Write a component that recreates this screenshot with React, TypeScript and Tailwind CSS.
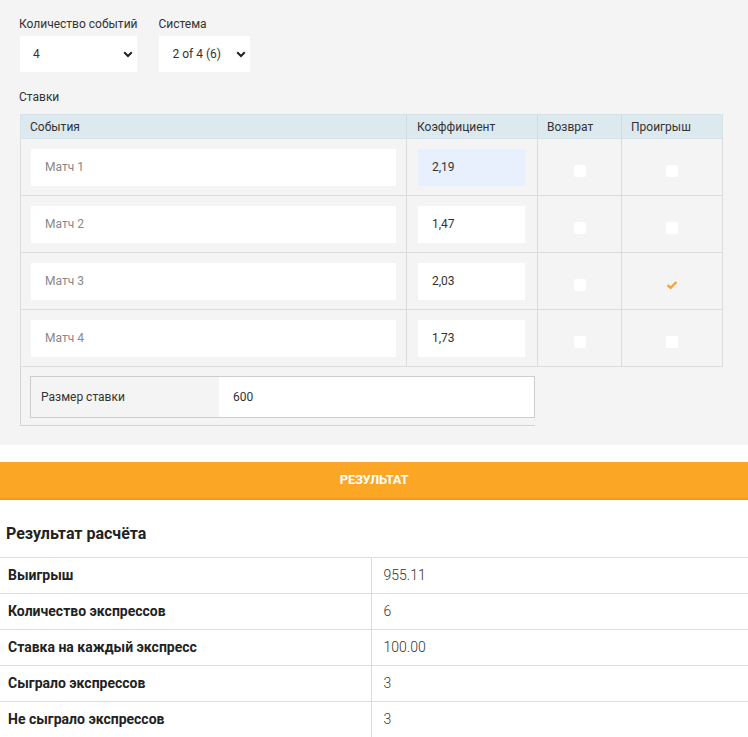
import React from 'react';

const matches = [
  { name: 'Матч 1', coef: '2,19', active: true, lose: false },
  { name: 'Матч 2', coef: '1,47', active: false, lose: false },
  { name: 'Матч 3', coef: '2,03', active: false, lose: true },
  { name: 'Матч 4', coef: '1,73', active: false, lose: false },
];

const results = [
  ['Выигрыш', '955.11'],
  ['Количество экспрессов', '6'],
  ['Ставка на каждый экспресс', '100.00'],
  ['Сыграло экспрессов', '3'],
  ['Не сыграло экспрессов', '3'],
];

const Chevron = () => (
  <svg width="10" height="7" viewBox="0 0 10 7" fill="none">
    <path d="M1.2 1.2 5 5 8.8 1.2" stroke="#222" strokeWidth="2" />
  </svg>
);

const Box = ({ checked }: { checked?: boolean }) =>
  checked ? (
    <svg width="12" height="10" viewBox="0 0 12 10">
      <path d="M1.5 5.2 4.6 7.8 10.5 2" stroke="#f3a53a" strokeWidth="2.4" fill="none" />
    </svg>
  ) : (
    <div className="w-3 h-3 bg-white rounded-[2px]" />
  );

export default function App() {
  return (
    <div className="w-[748px] h-[737px] overflow-hidden bg-white text-[#333]" style={{ fontFamily: 'Roboto, "Liberation Sans", sans-serif' }}>
      <div className="bg-[#f4f4f4] h-[445px] pt-[16px] pl-[19px]">
        <div className="flex gap-[21px]">
          <div className="flex flex-col">
            <span className="text-[12px] leading-[16px] text-[#333]">Количество событий</span>
            <div className="mt-[4px] ml-px w-[117px] h-9 bg-white flex items-center justify-between pl-[13px] pr-[4px] text-[12px]">
              <span>4</span>
              <Chevron />
            </div>
          </div>
          <div className="flex flex-col">
            <span className="text-[12px] leading-[16px] text-[#333]">Система</span>
            <div className="mt-[4px] w-[91px] h-9 bg-white flex items-center justify-between pl-[14px] pr-[4px] text-[12px]">
              <span>2 of 4 (6)</span>
              <Chevron />
            </div>
          </div>
        </div>
        <div className="mt-[17px] text-[12px] leading-[16px]">Ставки</div>
        <div className="mt-[9px] ml-px w-[703px] text-[12px]">
          <div className="flex h-[25px] bg-[#dce9ef] border border-[#d6e2e8] items-center">
            <div className="w-[386px] pl-[9px] border-r border-[#cfdbe0] h-full flex items-center">События</div>
            <div className="w-[131px] pl-[10px] border-r border-[#cfdbe0] h-full flex items-center">Коэффициент</div>
            <div className="w-[84px] pl-[9px] border-r border-[#cfdbe0] h-full flex items-center">Возврат</div>
            <div className="flex-1 pl-[9px] h-full flex items-center">Проигрыш</div>
          </div>
          {matches.map((m) => (
            <div key={m.name} className="flex h-[57px] border-x border-b border-[#dcdcdc]">
              <div className="w-[386px] border-r border-[#dcdcdc] pl-[10px] pr-[10px] flex items-center">
                <div className="w-full h-[37px] bg-white flex items-center pl-[14px] text-[#888]">{m.name}</div>
              </div>
              <div className="w-[131px] border-r border-[#dcdcdc] pl-[11px] flex items-center">
                <div className={`w-[107px] h-[37px] flex items-center pl-[14px] text-[#333] ${m.active ? 'bg-[#e8f0fe]' : 'bg-white'}`}>{m.coef}</div>
              </div>
              <div className="w-[84px] border-r border-[#dcdcdc] flex items-center justify-center pt-[8px]">
                <Box />
              </div>
              <div className="flex-1 flex items-center justify-center pt-[8px]">
                <Box checked={m.lose} />
              </div>
            </div>
          ))}
          <div className="w-[515px] border-l border-b border-[#d4d4d4] pl-[9px] pt-[9px] pb-[7px]">
            <div className="h-[42px] border border-[#cdcdcd] flex items-center">
              <div className="w-[188px] pl-[10px]">Размер ставки</div>
              <div className="flex-1 h-full bg-white flex items-center pl-[14px]">600</div>
            </div>
          </div>
        </div>
      </div>
      <div className="mt-[17px] h-[38px] bg-[#fca626] border-b-2 border-[#f19a1c] flex items-center justify-center text-white font-bold text-[13px] tracking-tight">
        РЕЗУЛЬТАТ
      </div>
      <div className="pl-[6px] mt-[24px] text-[16px] font-bold leading-[20px] text-[#222]">Результат расчёта</div>
      <table className="mt-[13px] w-full border-collapse text-[14px]">
        <tbody>
          {results.map(([k, v]) => (
            <tr key={k} className="h-9">
              <td className="w-[371px] border border-[#dcdcdc] border-l-0 pl-[8px] font-bold text-[#222]">{k}</td>
              <td className="border border-[#dcdcdc] border-r-0 pl-[12px] font-light text-[#333]">{v}</td>
            </tr>
          ))}
        </tbody>
      </table>
    </div>
  );
}
